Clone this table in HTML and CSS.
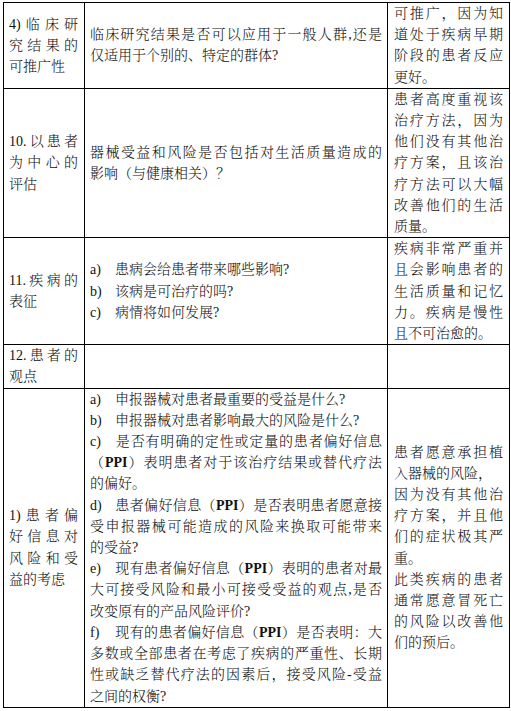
FILE: index.html
```html
<!DOCTYPE html>
<html lang="zh-CN">
<head>
<meta charset="utf-8">
<title>患者偏好表</title>
<link rel="stylesheet" href="styles.css">
</head>
<body>
<table class="grid">
  <tbody>
    <tr>
      <td class="c1">
        <span class="l j">4)临床研</span>
        <span class="l j">究结果的</span>
        <span class="l">可推广性</span>
      </td>
      <td class="c2">
        <span class="l j">临床研究结果是否可以应用于一般人群,还是</span>
        <span class="l">仅适用于个别的、特定的群体?</span>
      </td>
      <td class="c3">
        <span class="l j">可推广，因为知</span>
        <span class="l j">道处于疾病早期</span>
        <span class="l j">阶段的患者反应</span>
        <span class="l">更好。</span>
      </td>
    </tr>
    <tr>
      <td class="c1">
        <span class="l j">10.以患者</span>
        <span class="l j">为中心的</span>
        <span class="l">评估</span>
      </td>
      <td class="c2">
        <span class="l j">器械受益和风险是否包括对生活质量造成的</span>
        <span class="l">影响（与健康相关）？</span>
      </td>
      <td class="c3">
        <span class="l j">患者高度重视该</span>
        <span class="l j">治疗方法，因为</span>
        <span class="l j">他们没有其他治</span>
        <span class="l j">疗方案，且该治</span>
        <span class="l j">疗方法可以大幅</span>
        <span class="l j">改善他们的生活</span>
        <span class="l">质量。</span>
      </td>
    </tr>
    <tr>
      <td class="c1">
        <span class="l j">11.疾病的</span>
        <span class="l">表征</span>
      </td>
      <td class="c2">
        <span class="l"><span class="mk">a)</span>患病会给患者带来哪些影响?</span>
        <span class="l"><span class="mk">b)</span>该病是可治疗的吗?</span>
        <span class="l"><span class="mk">c)</span>病情将如何发展?</span>
      </td>
      <td class="c3">
        <span class="l j">疾病非常严重并</span>
        <span class="l j">且会影响患者的</span>
        <span class="l j">生活质量和记忆</span>
        <span class="l j">力。疾病是慢性</span>
        <span class="l">且不可治愈的。</span>
      </td>
    </tr>
    <tr>
      <td class="c1 top">
        <span class="l j">12.患者的</span>
        <span class="l">观点</span>
      </td>
      <td class="c2"></td>
      <td class="c3"></td>
    </tr>
    <tr>
      <td class="c1">
        <span class="l j">1)患者偏</span>
        <span class="l j">好信息对</span>
        <span class="l j">风险和受</span>
        <span class="l">益的考虑</span>
      </td>
      <td class="c2">
        <span class="l"><span class="mk">a)</span>申报器械对患者最重要的受益是什么?</span>
        <span class="l"><span class="mk">b)</span>申报器械对患者影响最大的风险是什么?</span>
        <span class="l j"><span class="mk">c)</span>是否有明确的定性或定量的患者偏好信息</span>
        <span class="l j">（<b>PPI</b>）表明患者对于该治疗结果或替代疗法</span>
        <span class="l">的偏好。</span>
        <span class="l j"><span class="mk">d)</span>患者偏好信息（<b>PPI</b>）是否表明患者愿意接</span>
        <span class="l j">受申报器械可能造成的风险来换取可能带来</span>
        <span class="l">的受益?</span>
        <span class="l j"><span class="mk">e)</span>现有患者偏好信息（<b>PPI</b>）表明的患者对最</span>
        <span class="l j">大可接受风险和最小可接受受益的观点,是否</span>
        <span class="l">改变原有的产品风险评价?</span>
        <span class="l j"><span class="mk">f)</span>现有的患者偏好信息（<b>PPI</b>）是否表明：大</span>
        <span class="l j">多数或全部患者在考虑了疾病的严重性、长期</span>
        <span class="l j">性或缺乏替代疗法的因素后，接受风险-受益</span>
        <span class="l">之间的权衡?</span>
      </td>
      <td class="c3">
        <span class="l j">患者愿意承担植</span>
        <span class="l">入器械的风险，</span>
        <span class="l j">因为没有其他治</span>
        <span class="l j">疗方案，并且他</span>
        <span class="l j">们的症状极其严</span>
        <span class="l">重。</span>
        <span class="l j">此类疾病的患者</span>
        <span class="l j">通常愿意冒死亡</span>
        <span class="l j">的风险以改善他</span>
        <span class="l">们的预后。</span>
      </td>
    </tr>
  </tbody>
</table>
</body>
</html>
```
FILE: styles.css
```css
html, body {
  background: #ffffff;
}

body {
  margin: 2px 0 0 3px;
  font-family: "Liberation Serif", "Noto Serif CJK SC", "Noto Sans CJK SC", serif;
  font-size: 14px;
  font-weight: 300;
  line-height: 21.2px;
  color: #111111;
}

.grid {
  border-collapse: separate;
  border-spacing: 0;
  table-layout: fixed;
  width: 507px;
  border-top: 1px solid #000;
  border-left: 1px solid #000;
}

.grid td {
  box-sizing: border-box;
  padding: 0;
  vertical-align: middle;
  border-right: 1px solid #000;
  border-bottom: 1px solid #000;
}

.c1 {
  width: 81px;
  padding-left: 5px !important;
  padding-right: 6px !important;
}

.c2 {
  width: 303px;
  padding-left: 5px !important;
  padding-right: 5px !important;
}

.c3 {
  width: 122px;
  padding-left: 6px !important;
  padding-right: 6px !important;
}

.grid td.top {
  vertical-align: top;
}

.l {
  display: block;
  white-space: nowrap;
}

.j {
  text-align: justify;
  text-align-last: justify;
}

.mk {
  display: inline-block;
  width: 25px;
}

b {
  font-weight: bold;
}
```
